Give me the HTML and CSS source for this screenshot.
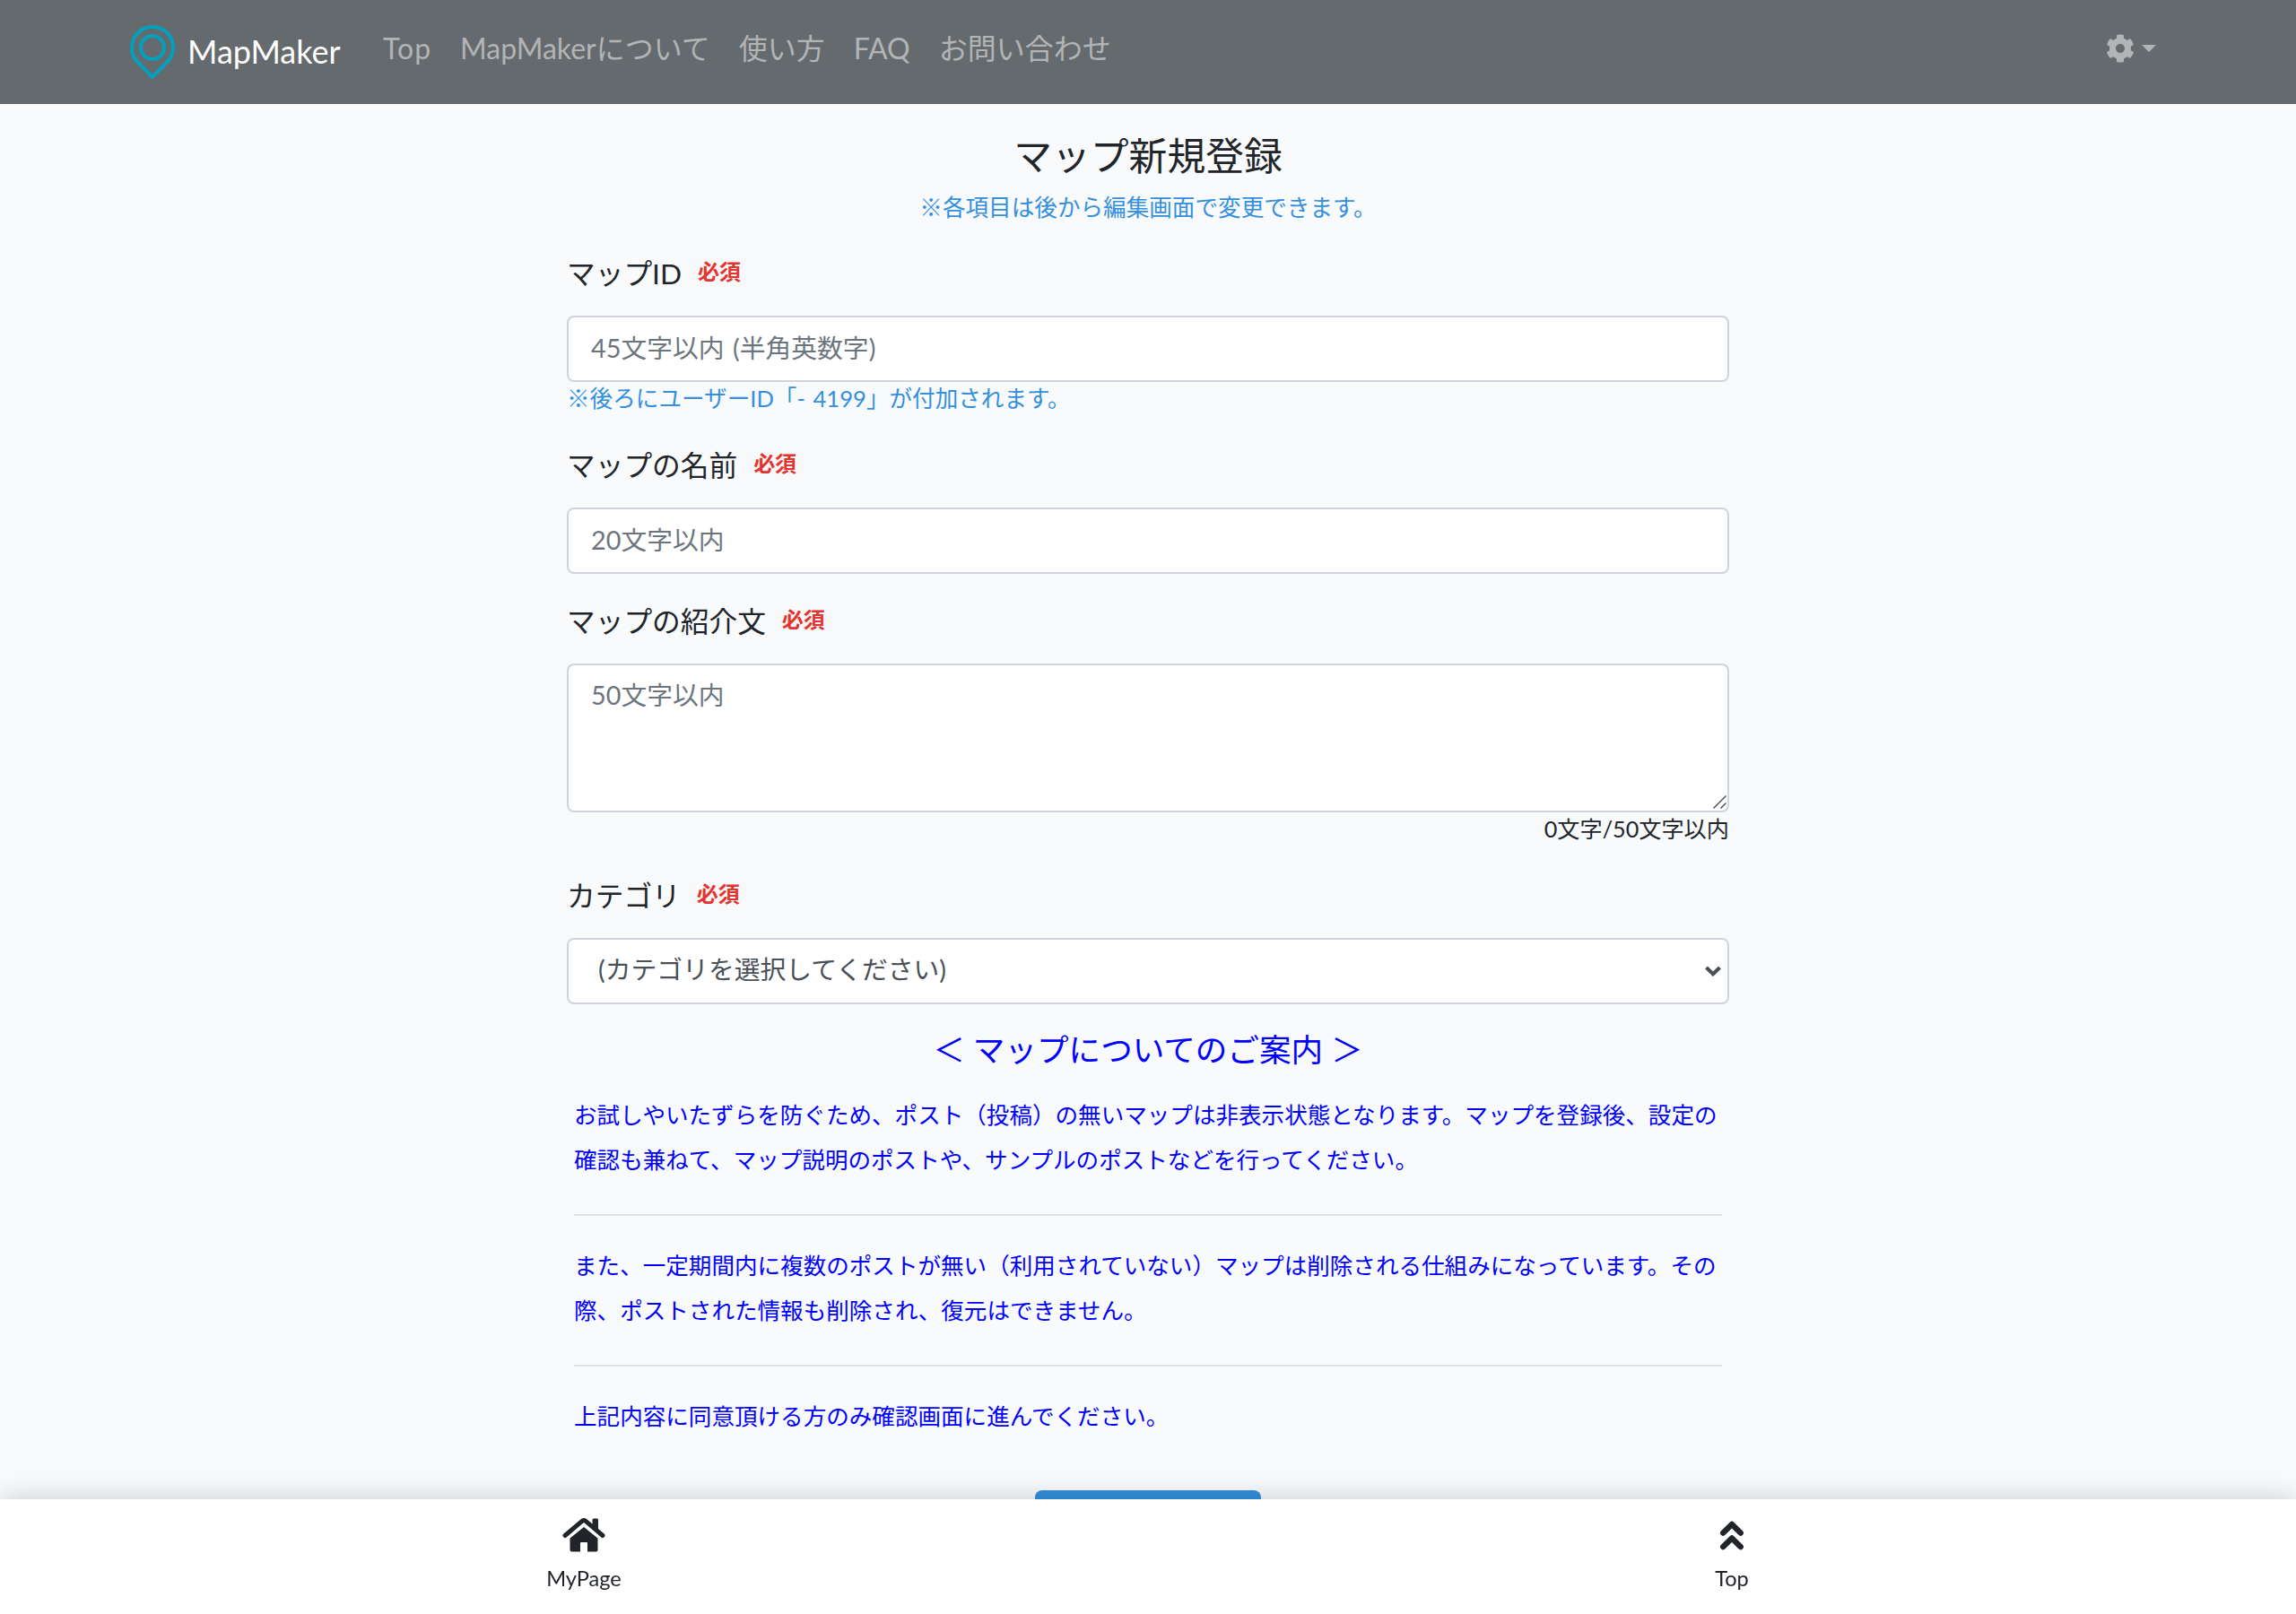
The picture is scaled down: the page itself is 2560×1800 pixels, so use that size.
FILE: index.html
```html
<!DOCTYPE html>
<html lang="ja">
<head>
    <meta charset="UTF-8">
    <meta name="viewport" content="width=device-width, initial-scale=1.0">
    <title>マップ新規登録 | MapMaker</title>
    <link rel="stylesheet" href="styles.css">
</head>
<body>
    <nav class="navbar">
        <a class="brand" href="#">
            <svg class="brand-logo" viewBox="0 0 50 60">
                <path d="M25 2C12 2 2 12 2 25.500C2 31 4 36 7 39.500L25 58L43 39.500C46 36 48 31 48 25.500C48 12 38 2 25 2Z"/>
                <circle cx="25" cy="25" r="13"/>
            </svg>
            <span class="brand-name">MapMaker</span>
        </a>
        <ul class="nav-links">
            <li><a href="#">Top</a></li>
            <li><a href="#">MapMakerについて</a></li>
            <li><a href="#">使い方</a></li>
            <li><a href="#">FAQ</a></li>
            <li><a href="#">お問い合わせ</a></li>
        </ul>
        <a class="settings" href="#">
            <svg class="cog" viewBox="0 0 512 512"><path d="M487.4 315.7l-42.6-24.6c4.3-23.2 4.3-47 0-70.2l42.6-24.6c4.900-2.800 7.100-8.600 5.500-14-11.100-35.600-30-67.800-54.700-94.600-3.800-4.100-10-5.100-14.800-2.300L380.800 110c-17.900-15.400-38.500-27.300-60.800-35.100V25.800c0-5.600-3.900-10.500-9.400-11.700-36.700-8.200-74.300-7.800-109.200 0-5.500 1.200-9.400 6.100-9.400 11.700V75c-22.200 7.900-42.800 19.800-60.800 35.100L88.700 85.500c-4.900-2.800-11-1.900-14.800 2.300-24.700 26.700-43.600 58.900-54.700 94.600-1.700 5.400.6 11.200 5.500 14L67.300 221c-4.300 23.200-4.300 47 0 70.200l-42.600 24.600c-4.900 2.800-7.100 8.600-5.500 14 11.100 35.600 30 67.800 54.700 94.600 3.800 4.100 10 5.100 14.800 2.300l42.600-24.600c17.900 15.400 38.500 27.300 60.800 35.100v49.200c0 5.600 3.900 10.500 9.400 11.700 36.700 8.200 74.300 7.800 109.200 0 5.500-1.200 9.400-6.100 9.400-11.700v-49.200c22.200-7.900 42.800-19.800 60.800-35.100l42.600 24.600c4.900 2.800 11 1.900 14.800-2.300 24.700-26.700 43.600-58.900 54.700-94.600 1.500-5.500-.7-11.300-5.600-14.100zM256 336c-44.100 0-80-35.900-80-80s35.900-80 80-80 80 35.900 80 80-35.900 80-80 80z"/></svg>
            <span class="caret"></span>
        </a>
    </nav>

    <main class="container">
        <h1>マップ新規登録</h1>
        <p class="note center">※各項目は後から編集画面で変更できます。</p>

        <form>
            <div class="form-group">
                <label for="mapId">マップID<span class="badge">必須</span></label>
                <input type="text" id="mapId" class="form-control" placeholder="45文字以内 (半角英数字)">
                <p class="note">※後ろにユーザーID「- 4199」が付加されます。</p>
            </div>
            <div class="form-group">
                <label for="mapName">マップの名前<span class="badge">必須</span></label>
                <input type="text" id="mapName" class="form-control" placeholder="20文字以内">
            </div>
            <div class="form-group">
                <label for="mapText">マップの紹介文<span class="badge">必須</span></label>
                <div class="control-wrap">
                    <textarea id="mapText" class="form-control" placeholder="50文字以内"></textarea>
                    <svg class="resizer" viewBox="0 0 15 15"><path d="M0.500 14.500L14.500 0.500M8.500 14.500L14.500 8.500"/></svg>
                </div>
                <p class="counter">0文字/50文字以内</p>
            </div>
            <div class="form-group">
                <label for="category">カテゴリ<span class="badge">必須</span></label>
                <div class="control-wrap">
                    <select id="category" class="form-control">
                        <option>(カテゴリを選択してください)</option>
                    </select>
                    <svg class="arrow" viewBox="0 0 18 12"><path d="M1.500 2L9 9.300L16.500 2"/></svg>
                </div>
            </div>

            <section class="guide">
                <h2>＜ マップについてのご案内 ＞</h2>
                <p>お試しやいたずらを防ぐため、ポスト（投稿）の無いマップは非表示状態となります。マップを登録後、設定の確認も兼ねて、マップ説明のポストや、サンプルのポストなどを行ってください。</p>
                <hr>
                <p>また、一定期間内に複数のポストが無い（利用されていない）マップは削除される仕組みになっています。その際、ポストされた情報も削除され、復元はできません。</p>
                <hr>
                <p>上記内容に同意頂ける方のみ確認画面に進んでください。</p>
            </section>
            <button type="button" class="btn"></button>
        </form>
    </main>

    <footer class="tabbar">
        <a href="#">
            <svg class="tab-icon" viewBox="0 0 48 38">
                <path class="stroke" d="M3 19.500L22 3.400Q24 1.800 26 3.400L45 19.500"/>
                <path d="M33.500 2Q33.500 0.500 35 0.500H38.500Q40 0.500 40 2V15L33.500 9.500Z"/>
                <path d="M8.500 22.500L24 10L39.500 22.500V35.500Q39.500 37.500 37.500 37.500H28V28Q28 27 27 27H21Q20 27 20 28V37.500H10.500Q8.500 37.500 8.500 35.500Z"/>
            </svg>
            <span class="tab-label">MyPage</span>
        </a>
        <a href="#">
            <svg class="tab-icon" viewBox="0 0 48 38">
                <path class="chevron" d="M14.300 16.500L24 7L33.700 16.500M14.300 32L24 22.500L33.700 32"/>
            </svg>
            <span class="tab-label">Top</span>
        </a>
    </footer>
</body>
</html>
```

FILE: styles.css
```css
* { box-sizing: border-box; }
body {
    margin: 0;
    height: 100vh;
    overflow: hidden;
    background-color: #f8fafc;
    color: #212529;
    font-family: Lato, "Noto Sans CJK JP", sans-serif;
    font-size: 28.8px;
    line-height: 1.6;
}
a { color: inherit; text-decoration: none; }
h1, h2, p { margin: 0; font-weight: 400; }

/* header */
.navbar {
    display: flex;
    align-items: center;
    height: 116px;
    padding: 0 156px 0 145px;
    background-color: #656a6e;
    color: rgba(255, 255, 255, 0.5);
    font-size: 32px;
}
.brand { display: flex; align-items: center; color: #fff; font-size: 36px; }
.brand-logo { width: 50px; height: 60px; fill: none; stroke: #00a1be; stroke-width: 4; }
.brand-name { width: 172px; margin-left: 14px; }
.nav-links { display: flex; gap: 32px; margin: 0 0 8px 46px; padding: 0; list-style: none; }
.nav-links li:first-child { letter-spacing: 1px; }
.settings { display: flex; align-items: center; gap: 8px; margin: 0 0 8px auto; }
.cog { width: 32px; height: 32px; fill: currentColor; }
.caret { border: 8px solid transparent; border-top-color: currentColor; border-bottom: 0; }

/* form */
.container { width: 1296px; margin: 0 auto; padding-top: 32px; }
h1 { font-size: 42.8px; line-height: 52px; text-align: center; }
.note { height: 40px; color: #3490dc; font-size: 25.6px; line-height: 37px; word-spacing: 2px; }
.center { margin: 11px 0 29px; line-height: 40px; text-align: center; }
.form-group { margin-bottom: 28px; }
label { display: flex; align-items: center; height: 51px; margin-bottom: 21px; font-size: 31.7px; }
.badge {
    margin: 0 0 5px 8px;
    padding: 0 10px;
    border-radius: 8px;
    background-color: #f8f9fa;
    color: #e3342f;
    font-size: 24px;
    font-weight: 700;
    line-height: 36px;
}
.form-control {
    display: block;
    width: 100%;
    height: 74px;
    padding: 11px 24px 13px 25px;
    border: 2px solid #ced4da;
    border-radius: 8px;
    background-color: #fff;
    color: #495057;
    font: inherit;
    word-spacing: 2px;
    appearance: none;
}
.form-control::placeholder { color: #6c757d; opacity: 1; }
textarea.form-control { height: 166px; padding-top: 10px; resize: none; }
select.form-control { padding: 8px 32px 12px 33px; }
.control-wrap { position: relative; }
.resizer { position: absolute; right: 3px; bottom: 4px; width: 15px; height: 15px; stroke: #555; stroke-width: 1.5; }
.arrow { position: absolute; right: 9px; top: 31px; width: 18px; height: 12px; fill: none; stroke: #495057; stroke-width: 4; }
.counter { height: 40px; font-size: 25.2px; line-height: 37px; text-align: right; }

/* guide */
.guide { margin-top: -6px; padding: 0 8px; color: #0000ff; font-size: 25.57px; line-height: 50px; }
.guide h2 { height: 76px; font-size: 35.6px; line-height: 57px; text-align: center; }
.guide hr { margin: 36px 0 30px; border: 0; border-top: 2px solid #dfe0e2; }
.btn {
    display: block;
    width: 252px;
    height: 74px;
    margin: 58px auto 0;
    border: 0;
    border-radius: 8px;
    background-color: #3490dc;
}

/* bottom menu */
.tabbar {
    position: fixed;
    left: 0;
    right: 0;
    bottom: 0;
    display: flex;
    height: 128px;
    background-color: #fff;
    box-shadow: 0 0 30px rgba(0, 0, 0, 0.2);
}
.tabbar a { display: flex; flex-direction: column; align-items: center; width: 1280px; padding: 21px 0 0 22px; }
.tab-icon { width: 48px; height: 38px; fill: #212529; }
.stroke, .chevron { fill: none; stroke: #212529; stroke-width: 5; stroke-linecap: round; }
.chevron { stroke-width: 6.500; stroke-linejoin: round; }
.tab-label { margin-top: 10px; font-size: 23.6px; line-height: 38px; }
```
